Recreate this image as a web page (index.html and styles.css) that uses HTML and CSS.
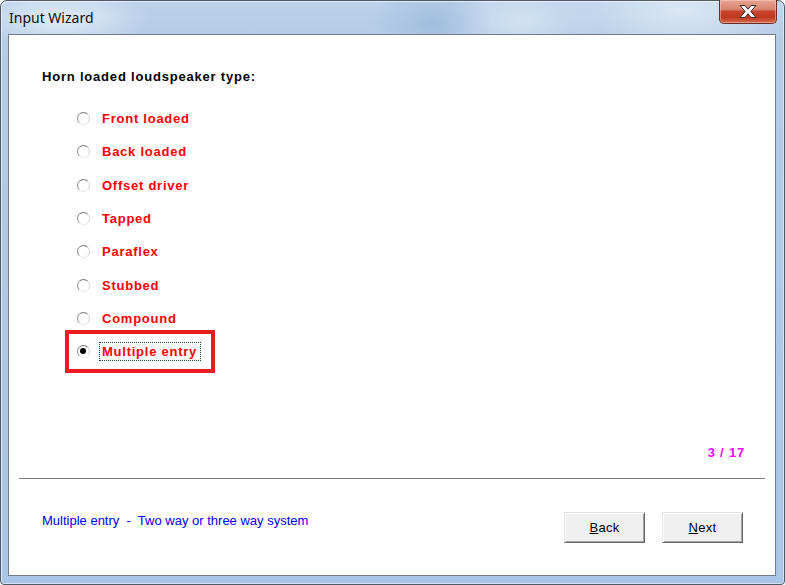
FILE: index.html
```html
<!DOCTYPE html>
<html>
<head>
<meta charset="utf-8">
<link rel="stylesheet" href="styles.css">
</head>
<body>
<div class="window">
  <div class="titlebar">
    <span class="title">Input Wizard</span>
    <button class="close" aria-label="Close">
      <svg width="22" height="15" viewBox="0 0 22 15">
        <path d="M3 1.5 H8 L11 5.3 L14 1.5 H19 L13.8 7.5 L19 13.5 H14 L11 9.7 L8 13.5 H3 L8.2 7.5 Z" fill="#fff" stroke="#3a2a2a" stroke-width="1" stroke-linejoin="round"/>
      </svg>
    </button>
  </div>
  <div class="client">
    <div class="heading">Horn loaded loudspeaker type:</div>
    <ul class="options">
      <li class="option"><span class="radio"></span><span class="label">Front loaded</span></li>
      <li class="option"><span class="radio"></span><span class="label">Back loaded</span></li>
      <li class="option"><span class="radio"></span><span class="label">Offset driver</span></li>
      <li class="option"><span class="radio"></span><span class="label">Tapped</span></li>
      <li class="option"><span class="radio"></span><span class="label">Paraflex</span></li>
      <li class="option"><span class="radio"></span><span class="label">Stubbed</span></li>
      <li class="option"><span class="radio"></span><span class="label">Compound</span></li>
      <li class="option selected"><span class="radio checked"></span><span class="label focus">Multiple entry</span><span class="annotation"></span></li>
    </ul>
    <div class="counter">3 / 17</div>
    <div class="separator"></div>
    <div class="footer">
      <div class="hint">Multiple entry&nbsp; -&nbsp; Two way or three way system</div>
      <div class="buttons">
        <button class="btn"><u>B</u>ack</button>
        <button class="btn"><u>N</u>ext</button>
      </div>
    </div>
  </div>
</div>
</body>
</html>
```

FILE: styles.css
```css
html, body {
  margin: 0;
  padding: 0;
  background: #ffffff;
}

.window {
  box-sizing: border-box;
  width: 785px;
  height: 585px;
  padding: 0 8px 8px 7px;
  border: 1px solid #4d5a68;
  border-radius: 7px 7px 4px 4px;
  background:
    radial-gradient(ellipse 90px 30px at 60px 18px, rgba(230,240,250,0.9), rgba(230,240,250,0) 100%),
    radial-gradient(ellipse 60px 40px at 430px 20px, rgba(150,180,215,0.6), rgba(150,180,215,0) 100%),
    radial-gradient(ellipse 80px 40px at 520px 20px, rgba(215,230,245,0.8), rgba(215,230,245,0) 100%),
    radial-gradient(ellipse 120px 50px at 680px 10px, rgba(225,236,248,0.8), rgba(225,236,248,0) 100%),
    linear-gradient(180deg, #bcd2ea 0px, #b4cce6 34px, #a9c6e6 100%);
  box-shadow: inset 1px 1px 0 rgba(255,255,255,0.6), inset -1px -1px 0 rgba(255,255,255,0.5);
  display: flex;
  flex-direction: column;
  font-family: "Liberation Sans", Arial, sans-serif;
}

.titlebar {
  height: 33px;
  flex: none;
  display: flex;
  align-items: flex-start;
  justify-content: space-between;
}

.title {
  margin: 7px 0 0 1px;
  font-family: "Noto Sans", "Open Sans", sans-serif;
  font-size: 14px;
  line-height: 20px;
  color: #0e0e0e;
}

.close {
  width: 58px;
  height: 24px;
  margin: -1px -1px 0 0;
  padding: 0;
  border: 1px solid #6b2a22;
  border-top: none;
  border-radius: 0 0 5px 5px;
  background: linear-gradient(180deg, #e8a493 0%, #d88572 40%, #c8432b 50%, #c0391f 75%, #d3694e 100%);
  box-shadow: inset 0 0 0 1px rgba(255,220,210,0.45);
  display: flex;
  align-items: center;
  justify-content: center;
}

.client {
  flex: 1;
  position: relative;
  background: #ffffff;
  border: 1px solid #6f7d8c;
  display: flex;
  flex-direction: column;
}

.heading {
  margin: 34px 0 0 33px;
  font-size: 13px;
  font-weight: bold;
  letter-spacing: 0.8px;
  line-height: 16px;
  color: #000;
}

.options {
  list-style: none;
  margin: 17px 0 0 0;
  padding: 0 0 0 68px;
}

.option {
  position: relative;
  height: 33.3px;
  display: flex;
  align-items: center;
}

.radio {
  box-sizing: border-box;
  width: 13px;
  height: 13px;
  border-radius: 50%;
  border: 1.5px solid;
  border-color: #7a7a7a #d6d6d6 #e6e6e6 #8a8a8a;
  background: #fff;
  flex: none;
  position: relative;
}

.radio.checked::after {
  content: "";
  position: absolute;
  left: 2px;
  top: 2px;
  width: 6px;
  height: 6px;
  border-radius: 50%;
  background: #000;
}

.label {
  margin-left: 9px;
  padding: 1px 3px 1px 2px;
  border: 1px solid transparent;
  font-size: 13px;
  font-weight: bold;
  letter-spacing: 0.75px;
  line-height: 15px;
  color: #ff0000;
}

.label.focus {
  border: 1px dotted #0a4a4a;
}

.annotation {
  position: absolute;
  left: -12px;
  top: -5px;
  width: 142px;
  height: 35px;
  border: 4px solid #ed1c24;
}

.counter {
  align-self: flex-end;
  margin: 77px 30px 0 0;
  font-size: 13px;
  font-weight: bold;
  letter-spacing: 0.8px;
  line-height: 16px;
  color: #ff00ff;
}

.separator {
  margin: 17px 10px 0 10px;
  height: 1px;
  background: #7c7c7c;
}

.footer {
  margin-top: 33px;
  padding: 0 32px 0 33px;
  display: flex;
  justify-content: space-between;
  align-items: flex-start;
}

.hint {
  margin-top: 1px;
  font-size: 13px;
  line-height: 16px;
  color: #0000ff;
}

.buttons {
  display: flex;
  gap: 17px;
}

.btn {
  box-sizing: border-box;
  width: 81px;
  height: 31px;
  padding: 0;
  background: #f0f0f0;
  border: 1px solid;
  border-color: #e3e3e3 #696969 #696969 #e3e3e3;
  box-shadow: inset 1px 1px 0 #ffffff, inset -1px -1px 0 #a0a0a0;
  font-family: "Liberation Sans", Arial, sans-serif;
  font-size: 13px;
  letter-spacing: 0.3px;
  color: #000;
}
```
